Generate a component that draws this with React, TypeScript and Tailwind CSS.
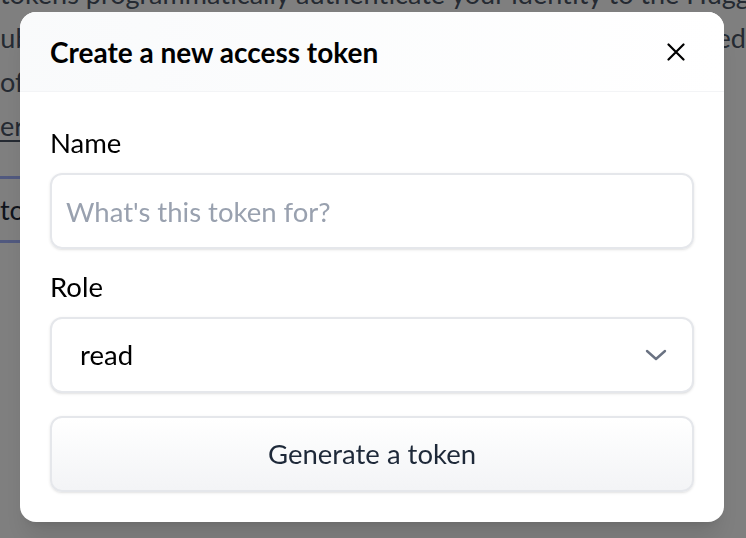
import { useState } from "react";

function CloseIcon() {
  return (
    <svg width="18" height="18" viewBox="0 0 18 18" fill="none" stroke="currentColor" strokeWidth={2.2} strokeLinecap="round">
      <path d="M1.5 1.5L16.5 16.5M16.5 1.5L1.5 16.5" />
    </svg>
  );
}

function ChevronDown() {
  return (
    <svg width="22" height="12" viewBox="0 0 22 12" fill="none" stroke="currentColor" strokeWidth={2.4} strokeLinecap="round" strokeLinejoin="round">
      <path d="M2 2L11 10L20 2" />
    </svg>
  );
}

export default function App() {
  const [name, setName] = useState("");
  const [role, setRole] = useState("read");

  return (
    <div
      className="relative w-[746px] h-[538px] overflow-hidden bg-white"
      style={{ fontFamily: "Lato, 'Noto Sans', sans-serif" }}
    >
      {/* page behind the dialog */}
      <div className="-mt-[28px] text-[27px] leading-[44px] text-gray-600">
        <p className="whitespace-nowrap overflow-hidden">
          tokens programmatically authenticate your identity to the  Hugging Face Hub
        </p>
        <p className="flex justify-between whitespace-nowrap overflow-hidden">
          <span className="-ml-[20px]">Hub, allowing applications to perform</span>
          <span>scoped</span>
        </p>
        <p className="whitespace-nowrap overflow-hidden">of permissions granted to them.</p>
        <p className="whitespace-nowrap overflow-hidden">
          <a className="underline underline-offset-4">er</a>
        </p>
        <div className="mt-[28px] w-[260px] h-[67px] border-y-[3px] border-indigo-300 flex items-center">
          <span className="text-gray-800">to</span>
        </div>
      </div>

      {/* dialog */}
      <div className="fixed inset-0 bg-black/50">
        <div className="ml-[20px] mt-[12px] w-[704px] rounded-2xl bg-white shadow-xl overflow-hidden">
          <div className="h-[80px] pl-[30px] pr-[39px] flex items-center justify-between border-b border-gray-100 bg-gradient-to-r from-gray-50 to-white">
            <h2 className="text-[28px] font-bold text-black">Create a new access token</h2>
            <button className="text-black">
              <CloseIcon />
            </button>
          </div>

          <div className="px-[30px] pt-[33px] pb-[30px]">
            <label className="block text-[27.5px] leading-[36px] text-black">Name</label>
            <input
              value={name}
              onChange={(e) => setName(e.target.value)}
              placeholder="What's this token for?"
              className="mt-[12px] w-full h-[76px] px-[14px] rounded-xl border-2 border-gray-200 text-[27.5px] text-black placeholder-gray-400 shadow-sm outline-none"
            />

            <label className="block mt-[20px] text-[27.5px] leading-[36px] text-black">Role</label>
            <div className="relative mt-[12px]">
              <select
                value={role}
                onChange={(e) => setRole(e.target.value)}
                className="w-full h-[76px] pl-[28px] pr-[60px] rounded-xl border-2 border-gray-200 text-[27.5px] text-black bg-white shadow-sm outline-none appearance-none"
              >
                <option value="read">read</option>
                <option value="write">write</option>
              </select>
              <span className="pointer-events-none absolute right-[27px] top-1/2 -translate-y-1/2 text-gray-500">
                <ChevronDown />
              </span>
            </div>

            <button className="mt-[23px] w-full h-[76px] rounded-xl border-2 border-gray-200 bg-gradient-to-b from-white to-gray-100 text-[27.5px] text-gray-800 shadow-sm">
              Generate a token
            </button>
          </div>
        </div>
      </div>
    </div>
  );
}
